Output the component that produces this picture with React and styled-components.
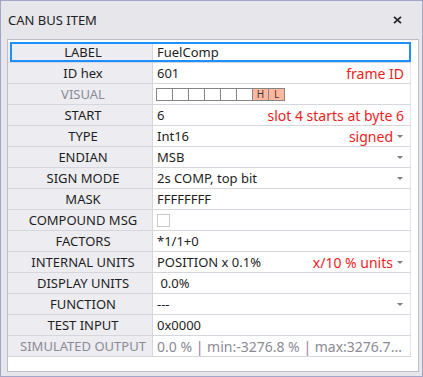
import React from "react";
import styled, { createGlobalStyle } from "styled-components";

const GlobalStyle = createGlobalStyle`
  html, body {
    margin: 0;
    padding: 0;
    background: #e6e6eb;
  }
  body {
    font-family: "Noto Sans", "Open Sans", sans-serif;
    font-size: 13px;
    color: #1e1e1e;
  }
`;

const Window = styled.div`
  width: 423px;
  height: 377px;
  box-sizing: border-box;
  border: 1px solid #a3a6c8;
  background: #e6e6eb;
  display: flex;
  flex-direction: column;
`;

const TitleBar = styled.div`
  height: 38px;
  flex: none;
  display: flex;
  align-items: center;
  justify-content: space-between;
  padding: 0 20px 0 7px;
`;

const Title = styled.span`
  font-size: 13px;
  color: #222;
`;

const CloseButton = styled.button`
  border: none;
  background: none;
  padding: 0;
  width: 9px;
  height: 8px;
  display: flex;
  align-items: center;
  justify-content: center;
  cursor: pointer;
`;

const Panel = styled.div`
  flex: 1;
  margin: 0 3px 4px 6px;
  border: 1px solid #bdbdca;
  background: #fff;
  padding-top: 2px;
`;

const Grid = styled.div`
  width: 403px;
  display: flex;
  flex-direction: column;
`;

const Row = styled.div`
  position: relative;
  box-sizing: border-box;
  display: grid;
  grid-template-columns: 145px 1fr;
  height: 21px;
  border-bottom: 1px solid #d6d6de;

  ${(p) =>
    p.$focused &&
    `
    &::after {
      content: "";
      position: absolute;
      left: 2px;
      right: 0;
      top: 0;
      bottom: 0;
      border: 2px solid #1e8fff;
      pointer-events: none;
    }
  `}
`;

const Label = styled.div`
  background: #ececf1;
  border-right: 1px solid #d6d6de;
  display: flex;
  align-items: center;
  justify-content: center;
  padding-left: 6px;
  white-space: nowrap;
  color: ${(p) => (p.$dim ? "#8b8b96" : "#1e1e1e")};
`;

const Value = styled.div`
  display: flex;
  align-items: center;
  padding: 0 5px 0 4px;
  min-width: 0;
  white-space: nowrap;
  font-size: ${(p) => (p.$dim ? "14px" : "13px")};
  color: ${(p) => (p.$dim ? "#8b8b96" : "#1e1e1e")};
  border-right: 1px solid #e4e4ea;
`;

const Text = styled.span`
  flex: 1;
  min-width: 0;
`;

const Note = styled.span`
  color: #ee1c1c;
  font-size: 14px;
  margin-left: auto;
  padding-right: ${(p) => (p.$withArrow ? "4px" : "1px")};
`;

const Arrow = styled.span`
  flex: none;
  width: 0;
  height: 0;
  margin-right: 2px;
  border-left: 3px solid transparent;
  border-right: 3px solid transparent;
  border-top: 3px solid #7d7d7d;
`;

const Bytes = styled.div`
  display: flex;
  height: 13px;
  margin-left: -1px;
`;

const ByteBox = styled.span`
  width: 15px;
  height: 11px;
  border: 1px solid #858585;
  margin-left: -1px;
  background: ${(p) => (p.$hot ? "#ffb89e" : "#fff")};
  font-size: 10px;
  line-height: 11px;
  text-align: center;
  color: #3a3a3a;
  &:first-child {
    margin-left: 0;
  }
`;

const Check = styled.span`
  width: 11px;
  height: 11px;
  border: 1px solid #c9c9d2;
  background: #fff;
`;

const Sep = styled.span`
  color: #a37aa3;
`;

const Dropdown = ({ children, note }) => (
  <>
    <Text>{children}</Text>
    {note && <Note $withArrow>{note}</Note>}
    <Arrow />
  </>
);

export default function App() {
  const bytes = ["", "", "", "", "", "", "H", "L"];
  return (
    <>
      <GlobalStyle />
      <Window>
        <TitleBar>
          <Title>CAN BUS ITEM</Title>
          <CloseButton aria-label="close">
            <svg width="9" height="8" viewBox="0 0 9 8">
              <path d="M1 0.8 L8 7.2 M8 0.8 L1 7.2" stroke="#2a2a2a" strokeWidth="1.8" />
            </svg>
          </CloseButton>
        </TitleBar>
        <Panel>
          <Grid>
            <Row $focused>
              <Label>LABEL</Label>
              <Value>
                <Text>FuelComp</Text>
              </Value>
            </Row>
            <Row>
              <Label>ID hex</Label>
              <Value>
                <Text>601</Text>
                <Note>frame ID</Note>
              </Value>
            </Row>
            <Row>
              <Label $dim>VISUAL</Label>
              <Value>
                <Bytes>
                  {bytes.map((b, i) => (
                    <ByteBox key={i} $hot={!!b}>
                      {b}
                    </ByteBox>
                  ))}
                </Bytes>
              </Value>
            </Row>
            <Row>
              <Label>START</Label>
              <Value>
                <Text>6</Text>
                <Note>slot 4 starts at byte 6</Note>
              </Value>
            </Row>
            <Row>
              <Label>TYPE</Label>
              <Value>
                <Dropdown note="signed">Int16</Dropdown>
              </Value>
            </Row>
            <Row>
              <Label>ENDIAN</Label>
              <Value>
                <Dropdown>MSB</Dropdown>
              </Value>
            </Row>
            <Row>
              <Label>SIGN MODE</Label>
              <Value>
                <Dropdown>2s COMP, top bit</Dropdown>
              </Value>
            </Row>
            <Row>
              <Label>MASK</Label>
              <Value>
                <Text>FFFFFFFF</Text>
              </Value>
            </Row>
            <Row>
              <Label>COMPOUND MSG</Label>
              <Value>
                <Check />
              </Value>
            </Row>
            <Row>
              <Label>FACTORS</Label>
              <Value>
                <Text>*1/1+0</Text>
              </Value>
            </Row>
            <Row>
              <Label>INTERNAL UNITS</Label>
              <Value>
                <Dropdown note="x/10 % units">POSITION x 0.1%</Dropdown>
              </Value>
            </Row>
            <Row>
              <Label>DISPLAY UNITS</Label>
              <Value>
                <Text>&nbsp;0.0%</Text>
              </Value>
            </Row>
            <Row>
              <Label>FUNCTION</Label>
              <Value>
                <Dropdown>---</Dropdown>
              </Value>
            </Row>
            <Row>
              <Label>TEST INPUT</Label>
              <Value>
                <Text>0x0000</Text>
              </Value>
            </Row>
            <Row>
              <Label $dim>SIMULATED OUTPUT</Label>
              <Value $dim>
                <Text>
                  0.0 % <Sep>|</Sep> min:-3276.8 % <Sep>|</Sep> max:3276.7...
                </Text>
              </Value>
            </Row>
          </Grid>
        </Panel>
      </Window>
    </>
  );
}
